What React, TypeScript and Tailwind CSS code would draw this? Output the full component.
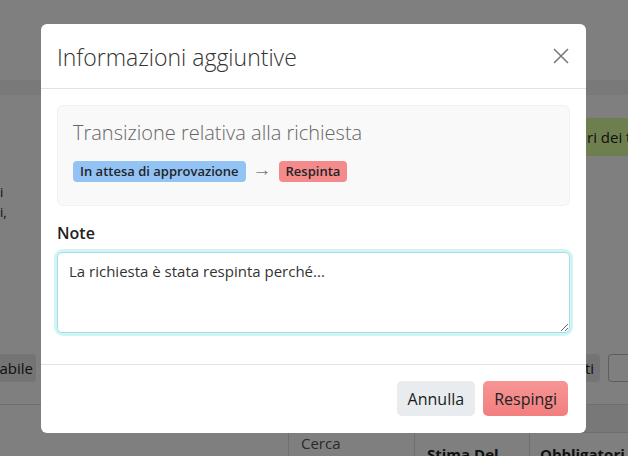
import React from 'react';

// ─── Background page (dimmed by the backdrop) ────────────────────────────────

function BackgroundPage() {
  return (
    <div className="absolute inset-0 bg-white text-[#222]" style={{ fontFamily: '"Open Sans", "Noto Sans", sans-serif' }}>
      <div className="h-[80px]" />
      <div className="h-[15px] bg-[#f2f2f2]" />
      <div className="flex justify-end pt-[23px]">
        <div className="h-[38px] w-[43px] bg-[#dcfe9e] text-[15px] leading-[38px] pl-[2px] whitespace-nowrap overflow-hidden">
          ri dei t
        </div>
      </div>
      <div className="pt-[26px] text-[13px] leading-[20px]">
        <div>i</div>
        <div>i,</div>
      </div>
      <div className="mt-[132px] flex items-center h-[28px]">
        <div className="h-[28px] w-[36px] bg-[#e8e8e8] rounded-r-[4px] text-[15px] leading-[28px] flex justify-end pr-[3px] overflow-hidden">
          abile
        </div>
        <div className="flex-1" />
        <div className="h-[28px] w-[22px] bg-[#e8e8e8] rounded-[4px] text-[15px] leading-[28px] pl-[7px] mr-[8px] overflow-hidden">
          ti
        </div>
        <div className="h-[28px] w-[20px] border border-[#bbb] rounded-l-[4px] border-r-0" />
      </div>
      <div className="mt-[22px] border-t border-[#dedede]" />
      <div className="flex h-[53px]">
        <div className="w-[288px]" />
        <div className="w-[126px] border-l border-[#dedede] pl-[12px] pt-[28px] text-[15px] text-[#555] leading-[20px]">
          Cerca
        </div>
        <div className="flex-1 flex flex-col">
          <div className="h-[28px] border-b border-[#dedede] bg-[#f0f0f0]" />
          <div className="flex flex-1 font-bold text-[15px] leading-[20px] overflow-hidden">
            <div className="w-[115px] border-l border-[#dedede] pl-[12px] pt-[11px] overflow-hidden whitespace-nowrap">
              Stima Del
            </div>
            <div className="flex-1 border-l border-[#dedede] pl-[10px] pt-[11px] overflow-hidden whitespace-nowrap">
              Obbligatori
            </div>
          </div>
        </div>
      </div>
    </div>
  );
}

// ─── Modal ───────────────────────────────────────────────────────────────────

function CloseIcon() {
  return (
    <svg width="16" height="16" viewBox="0 0 16 16" fill="none" stroke="#7a7a7a" strokeWidth="1.6">
      <path d="M1 1 L15 15 M15 1 L1 15" />
    </svg>
  );
}

export default function App() {
  return (
    <div
      className="relative w-[628px] h-[456px] overflow-hidden"
      style={{ fontFamily: '"Open Sans", "Noto Sans", sans-serif' }}
    >
      <BackgroundPage />
      <div className="absolute inset-0 bg-black/50" />

      <div className="absolute inset-0 flex pl-[41px] pt-[24px]">
        <div className="w-[545px] h-[409px] bg-white rounded-[6px] flex flex-col text-[#212529]">
          {/* Header */}
          <div className="h-[65px] flex items-center justify-between pl-[16px] pr-[17px] border-b border-[#e2e2e2]">
            <h4 className="text-[23px] font-light text-[#333] leading-[30px] pt-[1px]">Informazioni aggiuntive</h4>
            <CloseIcon />
          </div>

          {/* Body */}
          <div className="px-[16px] pt-[16px] h-[276px] border-b border-[#e2e2e2]">
            <div className="bg-[#f9f9f9] border border-[#f1f1f1] rounded-[6px] h-[101px] px-[15px] pt-[14px]">
              <div className="text-[20px] font-light text-[#666] leading-[26px]">Transizione relativa alla richiesta</div>
              <div className="flex items-center mt-[15px] text-[13px] font-semibold leading-[21px]">
                <span className="bg-[#93c3f5] rounded-[4px] px-[7px] h-[21px]">In attesa di approvazione</span>
                <span className="mx-[7px] text-[#777] font-light text-[19px] leading-none relative -top-[2px]">→</span>
                <span className="bg-[#f58a8a] rounded-[4px] px-[7px] h-[21px]">Respinta</span>
              </div>
            </div>

            <div className="mt-[15px] text-[16px] font-semibold leading-[24px] text-[#222]">Note</div>
            <div className="mt-[7px] rounded-[6px] shadow-[0_0_0_3px_#d3f3f5]">
              <textarea
                className="block w-full h-[81px] resize-y rounded-[5px] border border-[#9fdfe6] px-[11px] pt-[7px] text-[15px] leading-[22px] text-[#333] outline-none"
                defaultValue="La richiesta è stata respinta perché..."
                style={{ fontFamily: '"Open Sans", "Noto Sans", sans-serif' }}
              />
            </div>
          </div>

          {/* Footer */}
          <div className="flex-1 flex items-start justify-end pt-[16px] pr-[18px] gap-[8px]">
            <button className="h-[35px] px-[11px] rounded-[5px] bg-[#e9ecef] text-[16px] text-[#1c1c1c]">Annulla</button>
            <button className="h-[35px] px-[11px] rounded-[5px] bg-gradient-to-b from-[#f69595] to-[#f27e7e] text-[16px] text-[#222]">
              Respingi
            </button>
          </div>
        </div>
      </div>
    </div>
  );
}
